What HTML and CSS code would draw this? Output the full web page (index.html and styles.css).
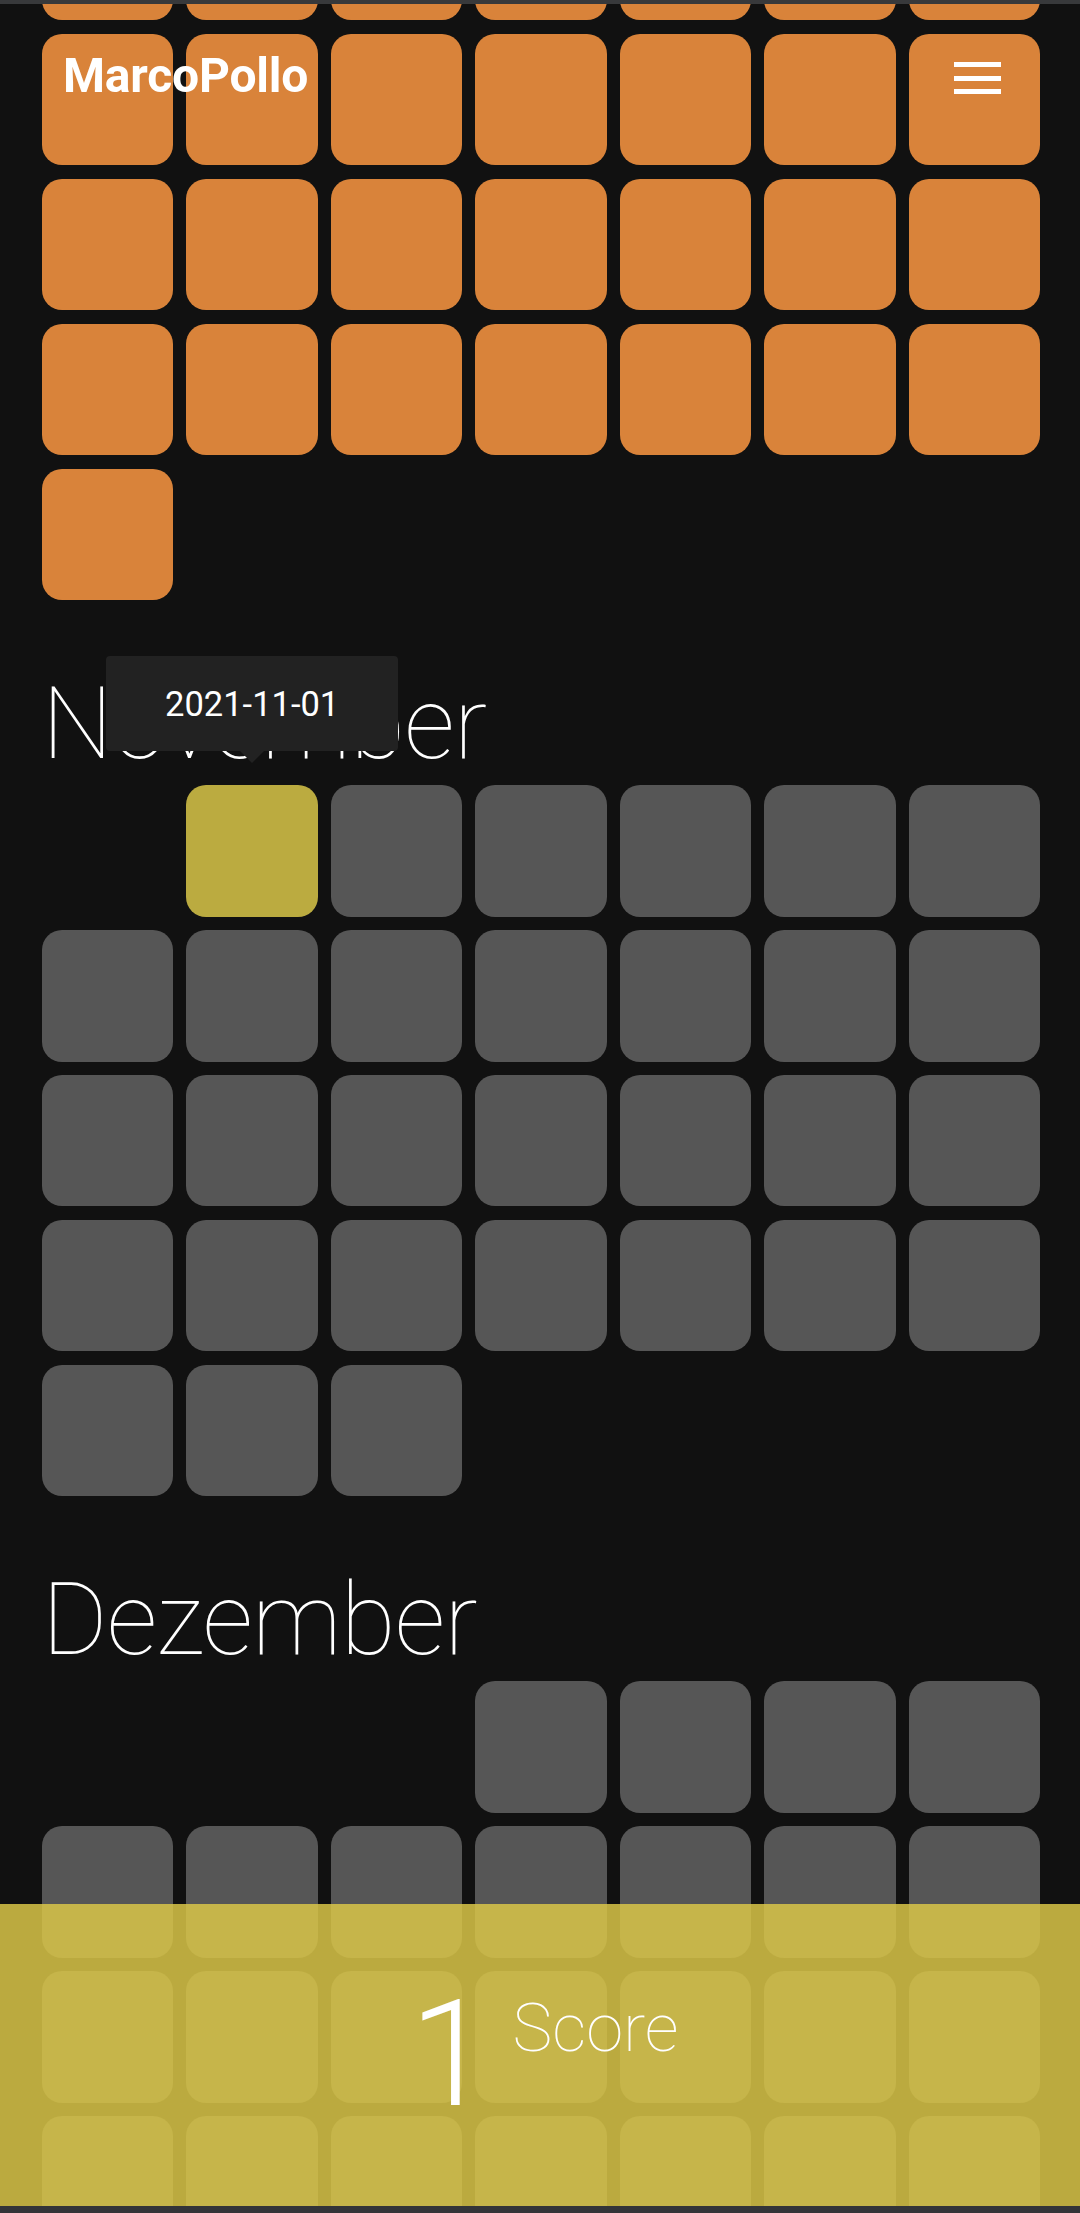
FILE: index.html
```html
<!DOCTYPE html>
<html lang="de">
<head>
<meta charset="utf-8">
<title>MarcoPollo</title>
<link rel="stylesheet" href="styles.css">
</head>
<body>
<div class="statusbar"></div>
<header class="appbar">
  <span class="brand">MarcoPollo</span>
  <button class="menu" aria-label="Menü"><span></span><span></span><span></span></button>
</header>

<main class="calendar">
  <section class="month month-first">
    <div class="days">
      <div class="day done"></div><div class="day done"></div><div class="day done"></div><div class="day done"></div><div class="day done"></div><div class="day done"></div><div class="day done"></div>
      <div class="day done"></div><div class="day done"></div><div class="day done"></div><div class="day done"></div><div class="day done"></div><div class="day done"></div><div class="day done"></div>
      <div class="day done"></div><div class="day done"></div><div class="day done"></div><div class="day done"></div><div class="day done"></div><div class="day done"></div><div class="day done"></div>
      <div class="day done"></div><div class="day done"></div><div class="day done"></div><div class="day done"></div><div class="day done"></div><div class="day done"></div><div class="day done"></div>
      <div class="day done"></div>
    </div>
  </section>

  <section class="month">
    <h2 class="month-title">November</h2>
    <div class="days">
      <div class="day today start-2"><div class="tooltip">2021-11-01</div></div><div class="day"></div><div class="day"></div><div class="day"></div><div class="day"></div><div class="day"></div>
      <div class="day"></div><div class="day"></div><div class="day"></div><div class="day"></div><div class="day"></div><div class="day"></div><div class="day"></div>
      <div class="day"></div><div class="day"></div><div class="day"></div><div class="day"></div><div class="day"></div><div class="day"></div><div class="day"></div>
      <div class="day"></div><div class="day"></div><div class="day"></div><div class="day"></div><div class="day"></div><div class="day"></div><div class="day"></div>
      <div class="day"></div><div class="day"></div><div class="day"></div>
    </div>
  </section>

  <section class="month">
    <h2 class="month-title">Dezember</h2>
    <div class="days">
      <div class="day start-4"></div><div class="day"></div><div class="day"></div><div class="day"></div>
      <div class="day"></div><div class="day"></div><div class="day"></div><div class="day"></div><div class="day"></div><div class="day"></div><div class="day"></div>
      <div class="day"></div><div class="day"></div><div class="day"></div><div class="day"></div><div class="day"></div><div class="day"></div><div class="day"></div>
      <div class="day"></div><div class="day"></div><div class="day"></div><div class="day"></div><div class="day"></div><div class="day"></div><div class="day"></div>
      <div class="day"></div><div class="day"></div><div class="day"></div><div class="day"></div><div class="day"></div><div class="day"></div>
    </div>
  </section>
</main>

<div class="score">
  <div class="score-inner">
    <span class="score-value">1</span>
    <span class="score-label">Score</span>
  </div>
</div>
<div class="navbar"></div>
</body>
</html>
```

FILE: styles.css
```css
html, body {
  margin: 0;
  padding: 0;
  height: 2213px;
  overflow: hidden;
}
body {
  background: #111111;
  color: #ffffff;
  font-family: Roboto, "Noto Sans", sans-serif;
}

.statusbar {
  position: fixed;
  top: 0;
  left: 0;
  right: 0;
  height: 4px;
  background: #38393b;
  z-index: 30;
}
.navbar {
  position: fixed;
  bottom: 0;
  left: 0;
  right: 0;
  height: 7px;
  background: #333438;
  z-index: 30;
}

.appbar {
  position: fixed;
  top: 0;
  left: 0;
  right: 0;
  height: 150px;
  display: flex;
  justify-content: space-between;
  align-items: flex-start;
  padding: 0 79px 0 63px;
  z-index: 20;
}
.brand {
  font-weight: 700;
  font-size: 48px;
  line-height: 48px;
  margin-top: 52px;
  letter-spacing: -0.2px;
}
.menu {
  margin-top: 62px;
  width: 47px;
  height: 32px;
  padding: 0;
  border: 0;
  background: transparent;
  display: flex;
  flex-direction: column;
  justify-content: space-between;
}
.menu span {
  display: block;
  height: 5px;
  width: 47px;
  background: #ffffff;
}

.calendar {
  padding: 0 40px 0 42px;
  height: 2213px;
  box-sizing: border-box;
  overflow: hidden;
}
.month-first {
  margin-top: -111px;
}
.month-title {
  margin: 74px 0 11px;
  font-weight: 100;
  font-size: 100px;
  line-height: 100px;
  letter-spacing: -0.8px;
  color: #ffffff;
}
.days {
  display: grid;
  grid-template-columns: repeat(7, 1fr);
  column-gap: 13px;
  row-gap: 13.5px;
}
.day {
  aspect-ratio: 1 / 1;
  border-radius: 20px;
  background: #565656;
  position: relative;
}
.day.done {
  background: #d9833a;
}
.day.today {
  background: #bbab40;
}
.start-2 { grid-column-start: 2; }
.start-4 { grid-column-start: 4; }

.tooltip {
  position: absolute;
  left: 50%;
  bottom: calc(100% + 34px);
  transform: translateX(-50%);
  width: 292px;
  height: 95px;
  background: #222222;
  border-radius: 4px;
  display: flex;
  align-items: center;
  justify-content: center;
  font-size: 34.5px;
  font-weight: 400;
  color: #ffffff;
  z-index: 5;
}
.tooltip::after {
  content: "";
  position: absolute;
  top: 100%;
  left: 50%;
  margin-left: -12px;
  border-left: 12px solid transparent;
  border-right: 12px solid transparent;
  border-top: 12px solid #222222;
}

.score {
  position: fixed;
  left: 0;
  right: 0;
  bottom: 7px;
  height: 302px;
  background: rgba(217, 198, 72, 0.85);
  display: flex;
  align-items: center;
  justify-content: center;
  z-index: 10;
}
.score-inner {
  display: flex;
  align-items: flex-start;
  gap: 21px;
  margin-left: 8px;
}
.score-value {
  font-size: 148px;
  line-height: 148px;
  font-weight: 300;
}
.score-label {
  font-size: 67px;
  line-height: 67px;
  font-weight: 100;
  margin-top: 14px;
}
```
